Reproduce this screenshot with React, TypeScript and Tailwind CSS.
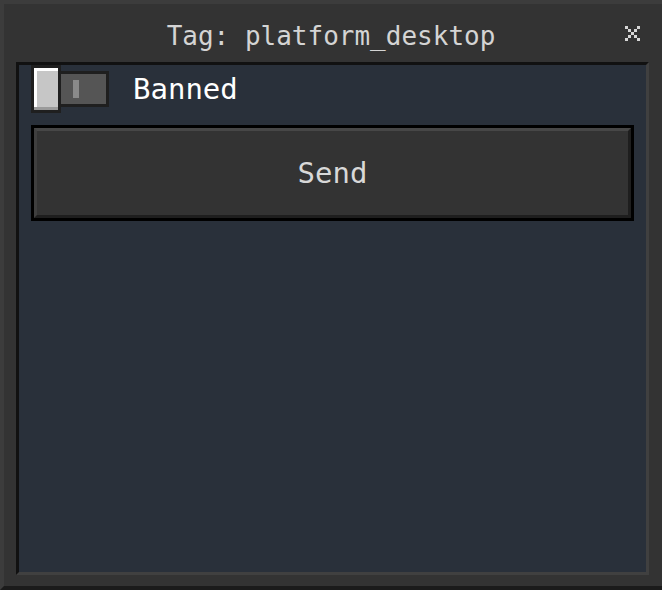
import React from "react";

const font = { fontFamily: '"DejaVu Sans Mono", "Liberation Mono", monospace' };

function CloseX() {
  const cells: [number, number][] = [
    [0, 0], [4, 0], [1, 1], [3, 1], [2, 2], [1, 3], [3, 3], [0, 4], [4, 4],
  ];
  return (
    <svg width="15" height="15" viewBox="0 0 15 15" shapeRendering="crispEdges">
      {cells.map(([x, y], i) => (
        <rect key={i} x={x * 3} y={y * 3} width="3" height="3" fill="#d6d6d6" />
      ))}
    </svg>
  );
}

function Toggle() {
  return (
    <div className="flex items-center">
      <div className="w-[30px] h-[48px] border-[3px] border-[#1f1f1f] bg-[#c6c6c6] flex flex-col">
        <div className="flex-1 flex">
          <div className="w-[3px] bg-white" />
          <div className="flex-1 flex flex-col">
            <div className="h-[3px] bg-white" />
            <div className="flex-1" />
          </div>
        </div>
        <div className="h-[3px] bg-[#9a9a9a]" />
      </div>
      <div className="w-[48px] h-[36px] border-t-[3px] border-b-[3px] border-r-[3px] border-[#1f1f1f] bg-[#555555] flex items-center pl-[12px]">
        <div className="w-[6px] h-[18px] bg-[#8a8a8a]" />
      </div>
    </div>
  );
}

export default function App() {
  return (
    <div
      className="w-[662px] h-[590px] bg-[#333333] border-t-4 border-l-4 border-b-4 border-t-[#3c3c3c] border-l-[#3c3c3c] border-b-[#1b1b1b] flex flex-col"
      style={font}
    >
      <div className="h-[58px] flex items-center justify-center relative pt-[6px] pr-[4px]">
        <span className="text-[26px] leading-none text-[#d4d4d4]">Tag: platform_desktop</span>
        <div className="absolute right-[22px] top-[22px]">
          <CloseX />
        </div>
      </div>
      <div className="ml-[12px] mr-[13px] mb-[11px] flex-1 border-t-[3px] border-l-[3px] border-t-[#111111] border-l-[#111111] border-b-[3px] border-r-[3px] border-b-[#404040] border-r-[#404040] bg-[#29303a] flex flex-col px-[12px]">
        <div className="flex items-center gap-[24px]">
          <Toggle />
          <span className="text-[29px] leading-none text-white pt-[1px]">Banned</span>
        </div>
        <div className="mt-[12px] h-[96px] border-[3px] border-black">
          <div className="h-full border-t-[3px] border-l-[3px] border-t-[#474747] border-l-[#3f3f3f] border-b-[3px] border-r-[3px] border-b-[#1e1e1e] border-r-[#1e1e1e] bg-[#333333] flex items-center justify-center">
            <span className="text-[29px] leading-none text-[#d8d8d8] pt-[1px]">Send</span>
          </div>
        </div>
      </div>
    </div>
  );
}
